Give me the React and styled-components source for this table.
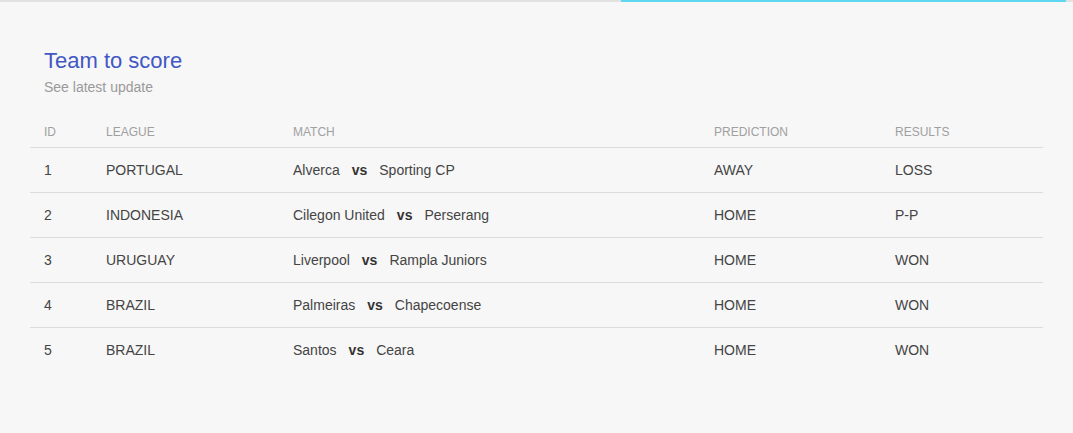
import React from 'react'
import styled, { createGlobalStyle } from 'styled-components'

const GlobalStyle = createGlobalStyle`
  html, body {
    margin: 0;
    padding: 0;
    background: #f7f7f7;
    font-family: "Liberation Sans", Arial, sans-serif;
  }
`

const rows = [
  { id: 1, league: 'PORTUGAL', home: 'Alverca', away: 'Sporting CP', prediction: 'AWAY', result: 'LOSS' },
  { id: 2, league: 'INDONESIA', home: 'Cilegon United', away: 'Perserang', prediction: 'HOME', result: 'P-P' },
  { id: 3, league: 'URUGUAY', home: 'Liverpool', away: 'Rampla Juniors', prediction: 'HOME', result: 'WON' },
  { id: 4, league: 'BRAZIL', home: 'Palmeiras', away: 'Chapecoense', prediction: 'HOME', result: 'WON' },
  { id: 5, league: 'BRAZIL', home: 'Santos', away: 'Ceara', prediction: 'HOME', result: 'WON' },
]

function App() {
  return (
    <Page>
      <GlobalStyle />
      <Progress>
        <ProgressFill />
      </Progress>
      <Card>
        <Heading>
          <Title>Team to score</Title>
          <Subtitle>See latest update</Subtitle>
        </Heading>
        <Table>
          <HeadRow>
            <HeadCell>ID</HeadCell>
            <HeadCell>League</HeadCell>
            <HeadCell>Match</HeadCell>
            <HeadCell>Prediction</HeadCell>
            <HeadCell>Results</HeadCell>
          </HeadRow>
          {rows.map((r, i) => (
            <Row key={r.id} last={i === rows.length - 1}>
              <Cell>{r.id}</Cell>
              <Cell>{r.league}</Cell>
              <Cell>
                {r.home}
                <Vs>vs</Vs>
                {r.away}
              </Cell>
              <Cell>{r.prediction}</Cell>
              <Cell>{r.result}</Cell>
            </Row>
          ))}
        </Table>
      </Card>
    </Page>
  )
}

const Page = styled.div`
  width: 1073px;
  height: 433px;
  background: #f7f7f7;
  overflow: hidden;
`

const Progress = styled.div`
  height: 2px;
  background: #e2e2e2;
  position: relative;
`

const ProgressFill = styled.div`
  position: absolute;
  top: 0;
  left: 621px;
  width: 445px;
  height: 2px;
  background: #5fd8f3;
`

const Card = styled.div`
  padding: 46px 30px 0 30px;
`

const Heading = styled.div`
  padding-left: 14px;
  margin-bottom: 21px;
`

const Title = styled.h2`
  margin: 0;
  font-size: 22px;
  line-height: 26px;
  font-weight: 400;
  color: #4257c4;
`

const Subtitle = styled.div`
  margin-top: 4px;
  font-size: 14px;
  line-height: 18px;
  color: #9a9a9a;
`

const Table = styled.div`
  width: 1013px;
`

const columns = '62px 187px 421px 181px 162px'

const HeadRow = styled.div`
  display: grid;
  grid-template-columns: ${columns};
  height: 30px;
  align-items: center;
  border-bottom: 1px solid #dcdcdc;
`

const HeadCell = styled.div`
  padding-left: 14px;
  font-size: 12px;
  color: #a0a0a0;
  text-transform: uppercase;
`

const Row = styled.div`
  display: grid;
  grid-template-columns: ${columns};
  height: 44px;
  align-items: center;
  border-bottom: ${p => (p.last ? 'none' : '1px solid #dcdcdc')};
`

const Cell = styled.div`
  padding-left: 14px;
  font-size: 14px;
  color: #444;
`

const Vs = styled.b`
  margin: 0 12px;
  color: #333;
  font-weight: 700;
`

export default App
